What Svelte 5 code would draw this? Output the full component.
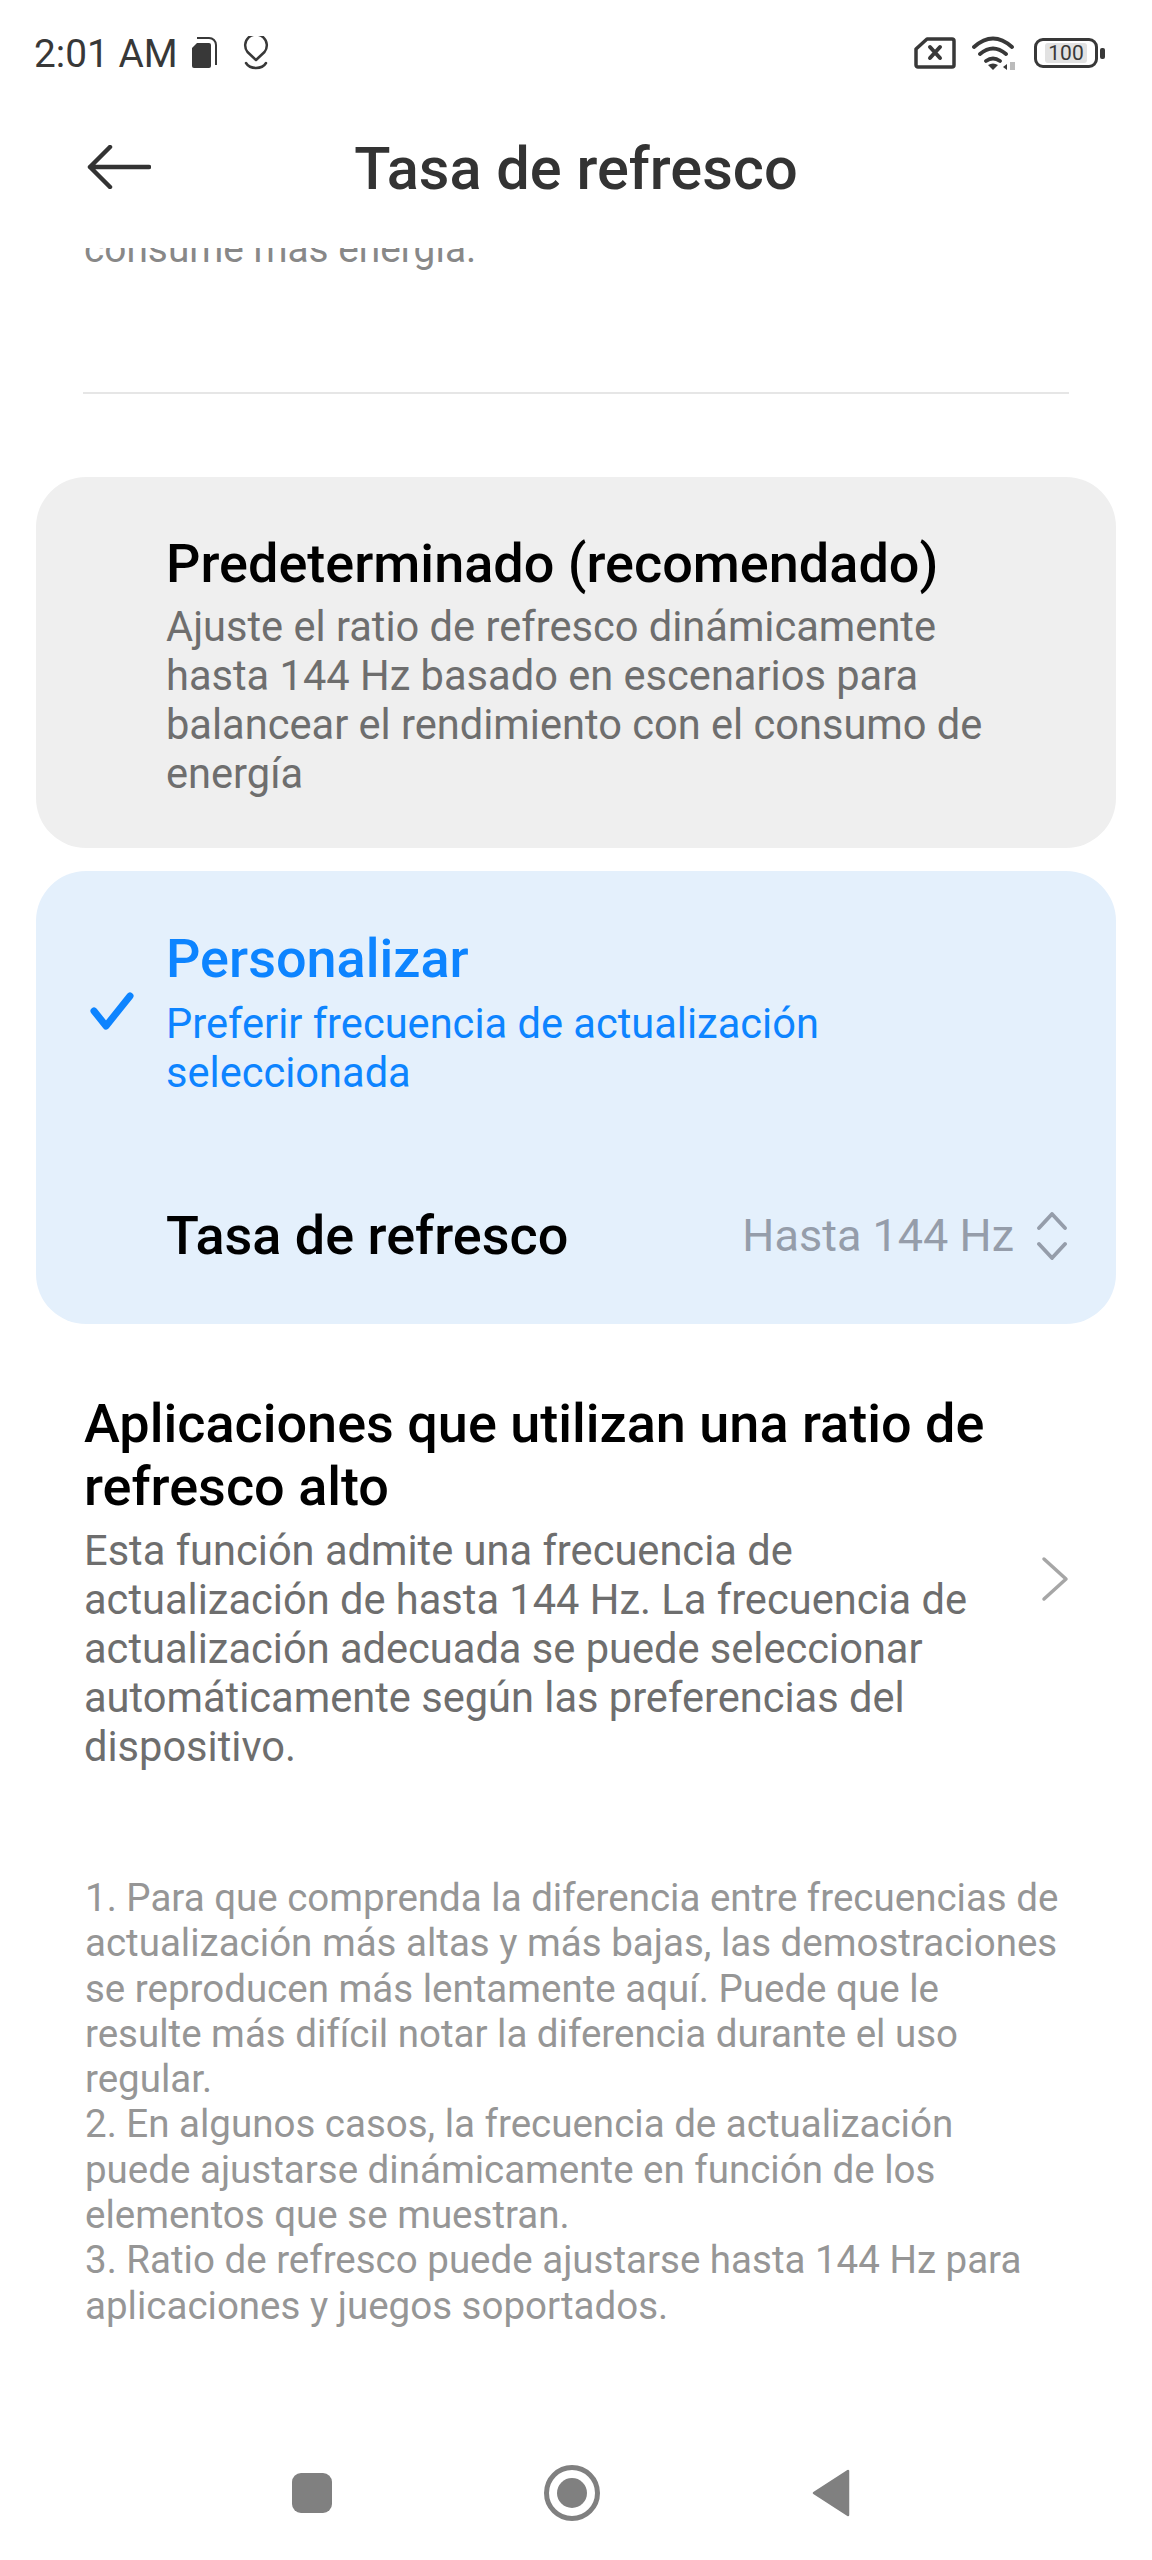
<script lang="ts">
  const notes = [
    '1. Para que comprenda la diferencia entre frecuencias de actualización más altas y más bajas, las demostraciones se reproducen más lentamente aquí. Puede que le resulte más difícil notar la diferencia durante el uso regular.',
    '2. En algunos casos, la frecuencia de actualización puede ajustarse dinámicamente en función de los elementos que se muestran.',
    '3. Ratio de refresco puede ajustarse hasta 144 Hz para aplicaciones y juegos soportados.'
  ];
</script>

<div class="screen">
  <div class="status">
    <div class="status-left">
      <span class="time">2:01 AM</span>
      <svg width="25" height="32" viewBox="0 0 25 32" class="sim">
        <path d="M0 11 5 6h12a2 2 0 0 1 2 2v21a2 2 0 0 1-2 2H2a2 2 0 0 1-2-2z" fill="#383838" />
        <path d="M5 1h12a7 7 0 0 1 7 7v20" fill="none" stroke="#383838" stroke-width="2" />
      </svg>
      <svg width="26" height="34" viewBox="0 0 26 34" class="loc">
        <path d="M13 24 4.500 16a10.800 10.800 0 1 1 17 0z" fill="none" stroke="#383838" stroke-width="2.500" stroke-linejoin="round" />
        <path d="M3 27q3 5 10 5t10-5" fill="none" stroke="#383838" stroke-width="2.500" stroke-linecap="round" />
      </svg>
    </div>
    <div class="status-right">
      <svg width="42" height="32" viewBox="0 0 42 32">
        <path d="M13 2h25a2 2 0 0 1 2 2v24a2 2 0 0 1-2 2H4a2 2 0 0 1-2-2V12z" fill="none" stroke="#383838" stroke-width="3.500" stroke-linejoin="round" />
        <path d="m16 10 10 11m0-11L16 21" stroke="#383838" stroke-width="4" stroke-linecap="round" />
      </svg>
      <svg width="46" height="36" viewBox="0 0 46 36" class="wifi">
        <path d="M2 12Q21-5 40 12M8 19q13-11 26 0M14 26q7-5 14 0" fill="none" stroke="#383838" stroke-width="3.800" stroke-linecap="round" />
        <path d="M16 30q5-3 10 0l-5 5z" fill="#383838" />
        <path d="m31 32 4-3v6z" fill="#383838" />
        <path d="M38 27h5v8h-5z" fill="#bbb" />
      </svg>
      <div class="battery">
        <div class="battery-body"><span class="battery-level">100</span></div>
        <div class="battery-tip"></div>
      </div>
    </div>
  </div>

  <header class="topbar">
    <svg width="64" height="44" viewBox="0 0 64 44" class="back">
      <path d="M62 22H3M23 2 3 22l20 20" fill="none" stroke="#333" stroke-width="4.500" stroke-linecap="round" stroke-linejoin="round" />
    </svg>
    <h1>Tasa de refresco</h1>
  </header>

  <div class="clipped"><span>consume más energía.</span></div>
  <div class="divider"></div>

  <section class="card plain">
    <div class="option">
      <h2>Predeterminado (recomendado)</h2>
      <p>Ajuste el ratio de refresco dinámicamente hasta 144 Hz basado en escenarios para balancear el rendimiento con el consumo de energía</p>
    </div>
  </section>

  <section class="card active">
    <svg width="46" height="38" viewBox="0 0 46 38" class="check">
      <path d="M6 19 18 34 42 4" fill="none" stroke="#0d84ff" stroke-width="7" stroke-linecap="round" stroke-linejoin="round" />
    </svg>
    <div class="option">
      <h2>Personalizar</h2>
      <p>Preferir frecuencia de actualización seleccionada</p>
    </div>
    <div class="picker">
      <span class="picker-label">Tasa de refresco</span>
      <span class="picker-value">Hasta 144 Hz</span>
      <svg width="32" height="48" viewBox="0 0 32 48">
        <path d="M3 16 16 2l13 14M3 32l13 14 13-14" fill="none" stroke="#959daa" stroke-width="3.800" stroke-linecap="round" stroke-linejoin="round" />
      </svg>
    </div>
  </section>

  <section class="apps">
    <div class="apps-text">
      <h2>Aplicaciones que utilizan una ratio de refresco alto</h2>
      <p>Esta función admite una frecuencia de actualización de hasta 144 Hz. La frecuencia de actualización adecuada se puede seleccionar automáticamente según las preferencias del dispositivo.</p>
    </div>
    <svg width="28" height="46" viewBox="0 0 28 46" class="chev">
      <path d="m3 3 22 20L3 43" fill="none" stroke="#a6a6a6" stroke-width="3.500" stroke-linecap="round" stroke-linejoin="round" />
    </svg>
  </section>

  <section class="notes">
    {#each notes as note}
      <p>{note}</p>
    {/each}
  </section>

  <nav class="navbar">
    <div class="nav-square"></div>
    <div class="nav-home"><div class="nav-dot"></div></div>
    <svg width="38" height="48" viewBox="0 0 38 48">
      <path d="M36 2v44L2 24z" fill="#808080" stroke="#808080" stroke-width="2.500" stroke-linejoin="round" />
    </svg>
  </nav>
</div>

<style>
  :global(body) { margin: 0; background: #fff; }
  .screen {
    width: 1152px;
    height: 2560px;
    overflow: hidden;
    display: flex;
    flex-direction: column;
    background: #fff;
    font-family: Roboto, "Liberation Sans", sans-serif;
  }
  .status { height: 106px; flex: none; display: flex; justify-content: space-between; align-items: center; padding: 0 47px 0 34px; box-sizing: border-box; color: #383838; }
  .status-left, .status-right { display: flex; align-items: center; }
  .time { font-size: 38.800px; }
  .sim { margin-left: 14px; }
  .loc { margin-left: 26px; }
  .wifi { margin-left: 16px; }
  .battery { display: flex; align-items: center; margin-left: 16px; gap: 2px; }
  .battery-body { width: 58px; height: 24px; border: 3px solid #383838; border-radius: 9px; display: flex; align-items: center; justify-content: center; box-sizing: content-box; }
  .battery-level { font-size: 21px; background: #e2e2e2; padding: 0 3px; line-height: 20px; border-radius: 3px; color: #383838; }
  .battery-tip { width: 5px; height: 11px; background: #383838; border-radius: 2px; }

  .topbar { height: 124px; flex: none; position: relative; display: flex; align-items: center; justify-content: center; padding-top: 2px; box-sizing: border-box; }
  .topbar h1 { margin: 0; font-size: 59.500px; font-weight: 500; color: #333; }
  .back { position: absolute; left: 87px; top: 39px; }

  .clipped { height: 25px; flex: none; margin-top: 18px; overflow: hidden; display: flex; align-items: flex-end; padding-left: 84px; font-size: 38.800px; line-height: 49px; color: #888; }
  .clipped span { flex: none; height: 49px; }
  .divider { height: 2px; flex: none; margin: 119px 83px 0; background: #e6e6e6; }

  .card { margin: 83px 36px 0; border-radius: 50px; box-sizing: border-box; flex: none; position: relative; }
  .plain { height: 371px; background: #efefef; padding: 55px 112px 0 130px; }
  .plain .option p { margin-top: 6px; }
  .active { height: 453px; margin-top: 23px; background: #e4f0fc; padding: 56px 112px 0 130px; }
  .option h2 { margin: 0; font-size: 54px; line-height: 64px; font-weight: 500; color: #000; }
  .option p { margin: 8px 0 0; font-size: 41.600px; line-height: 49px; color: #6e6e6e; }
  .active .option h2 { color: #0d84ff; }
  .active .option p { color: #0d84ff; }
  .check { position: absolute; left: 52px; top: 121px; }
  .picker { display: flex; align-items: center; margin: 107px -64px 0 0; }
  .picker-label { font-size: 54px; font-weight: 500; color: #000; flex: 1; }
  .picker-value { font-size: 45px; color: #959daa; margin-right: 22px; }

  .apps { display: flex; align-items: center; padding: 0 83px 0 84px; margin-top: 68px; flex: none; }
  .apps-text { flex: 1; min-width: 0; }
  .apps h2 { margin: 0; font-size: 54px; line-height: 63px; font-weight: 500; color: #000; }
  .apps p { margin: 8px 0 0; font-size: 41.600px; line-height: 49px; color: #6e6e6e; }
  .chev { flex: none; margin: 0 0 6px 50px; }

  .notes { padding: 0 91px 0 85px; margin-top: 104px; flex: none; }
  .notes p { margin: 0; font-size: 38.500px; line-height: 45.300px; color: #969696; }

  .navbar { margin-top: auto; height: 134px; flex: none; display: flex; justify-content: space-between; align-items: center; padding: 0 302px 0 292px; box-sizing: border-box; }
  .nav-square { width: 40px; height: 40px; background: #808080; border-radius: 9px; }
  .nav-home { width: 56px; height: 56px; box-sizing: border-box; border: 5px solid #808080; border-radius: 50%; display: flex; align-items: center; justify-content: center; }
  .nav-dot { width: 30px; height: 30px; background: #808080; border-radius: 50%; }
</style>
